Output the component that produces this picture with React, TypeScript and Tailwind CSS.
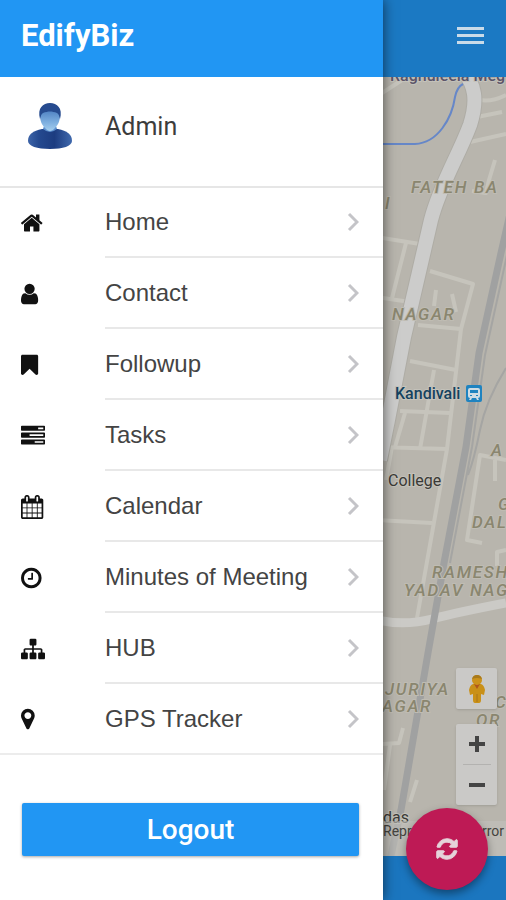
import React from "react";

const menu = [
  {
    label: "Home",
    box: "96 0 1792 1792",
    d: "M1472 992v480q0 26-19 45t-45 19h-384v-384h-256v384h-384q-26 0-45-19t-19-45v-480q0-1 .5-3t.5-3l575-474 575 474q1 2 1 6zm223-69l-62 74q-8 9-21 11h-3q-13 0-21-7l-692-577-692 577q-12 8-24 7-13-2-21-11l-62-74q-8-10-7-23.5t11-21.5l719-599q32-26 76-26t76 26l244 204v-195q0-14 9-23t23-9h192q14 0 23 9t9 23v408l219 182q10 8 11 21.5t-7 23.5z",
  },
  {
    label: "Contact",
    box: "256 0 1792 1792",
    d: "M1536 1399q0 109-62.5 187t-150.5 78h-854q-88 0-150.5-78t-62.5-187q0-85 8.5-160.5t31.5-152 58.5-131 94-89 134.5-34.5q131 128 313 128t313-128q76 0 134.5 34.5t94 89 58.5 131 31.5 152 8.5 160.5zm-256-887q0 159-112.5 271.5t-271.5 112.5-271.5-112.5-112.5-271.5 112.5-271.5 271.5-112.5 271.5 112.5 112.5 271.5z",
  },
  {
    label: "Followup",
    box: "256 0 1792 1792",
    d: "M1420 128q23 0 44 9 33 13 52.5 41t19.5 62v1289q0 34-19.5 62t-52.5 41q-19 8-44 8-48 0-83-32l-441-424-441 424q-36 33-83 33-23 0-44-9-33-13-52.5-41t-19.5-62v-1289q0-34 19.5-62t52.5-41q21-9 44-9h1048z",
  },
  {
    label: "Tasks",
    box: "0 0 1792 1792",
    d: "M1024 1408h640v-128h-640v128zm-384-512h1024v-128h-1024v128zm640-512h384v-128h-384v128zm512 832v256q0 26-19 45t-45 19h-1664q-26 0-45-19t-19-45v-256q0-26 19-45t45-19h1664q26 0 45 19t19 45zm0-512v256q0 26-19 45t-45 19h-1664q-26 0-45-19t-19-45v-256q0-26 19-45t45-19h1664q26 0 45 19t19 45zm0-512v256q0 26-19 45t-45 19h-1664q-26 0-45-19t-19-45v-256q0-26 19-45t45-19h1664q26 0 45 19t19 45z",
  },
  {
    label: "Calendar",
    box: "64 0 1792 1792",
    d: "M192 1664h288v-288h-288v288zm352 0h320v-288h-320v288zm-352-352h288v-320h-288v320zm352 0h320v-320h-320v320zm-352-384h288v-288h-288v288zm736 736h320v-288h-320v288zm-384-736h320v-288h-320v288zm768 736h288v-288h-288v288zm-384-352h320v-320h-320v320zm-352-864v-288q0-13-9.5-22.5t-22.5-9.5h-64q-13 0-22.5 9.5t-9.5 22.5v288q0 13 9.5 22.5t22.5 9.5h64q13 0 22.5-9.5t9.5-22.5zm736 864h288v-320h-288v320zm-384-384h320v-288h-320v288zm384 0h288v-288h-288v288zm32-480v-288q0-13-9.5-22.5t-22.5-9.5h-64q-13 0-22.5 9.5t-9.5 22.5v288q0 13 9.5 22.5t22.5 9.5h64q13 0 22.5-9.5t9.5-22.5zm384-64v1280q0 52-38 90t-90 38h-1408q-52 0-90-38t-38-90v-1280q0-52 38-90t90-38h128v-96q0-66 47-113t113-47h64q66 0 113 47t47 113v96h384v-96q0-66 47-113t113-47h64q66 0 113 47t47 113v96h128q52 0 90 38t38 90z",
  },
  {
    label: "Minutes of Meeting",
    box: "128 0 1792 1792",
    d: "M1024 544v448q0 14-9 23t-23 9h-320q-14 0-23-9t-9-23v-64q0-14 9-23t23-9h224v-352q0-14 9-23t23-9h64q14 0 23 9t9 23zm416 352q0-148-73-273t-198-198-273-73-273 73-198 198-73 273 73 273 198 198 273 73 273-73 198-198 73-273zm224 0q0 209-103 385.5t-279.5 279.5-385.5 103-385.5-103-279.5-279.5-103-385.5 103-385.5 279.5-279.5 385.5-103 385.5 103 279.5 279.5 103 385.5z",
  },
  {
    label: "HUB",
    box: "0 0 1792 1792",
    d: "M1792 1248v320q0 40-28 68t-68 28h-320q-40 0-68-28t-28-68v-320q0-40 28-68t68-28h96v-192h-512v192h96q40 0 68 28t28 68v320q0 40-28 68t-68 28h-320q-40 0-68-28t-28-68v-320q0-40 28-68t68-28h96v-192h-512v192h96q40 0 68 28t28 68v320q0 40-28 68t-68 28h-320q-40 0-68-28t-28-68v-320q0-40 28-68t68-28h96v-192q0-52 38-90t90-38h512v-192h-96q-40 0-68-28t-28-68v-320q0-40 28-68t68-28h320q40 0 68 28t28 68v320q0 40-28 68t-68 28h-96v192h512q52 0 90 38t38 90v192h96q40 0 68 28t28 68z",
  },
  {
    label: "GPS Tracker",
    box: "384 0 1792 1792",
    d: "M1152 640q0-106-75-181t-181-75-181 75-75 181 75 181 181 75 181-75 75-181zm256 0q0 109-33 179l-364 774q-16 33-47.5 52t-67.5 19-67.5-19-46.5-52l-365-774q-33-70-33-179 0-212 150-362t362-150 362 150 150 362z",
  },
];

function rowClass(i: number) {
  if (i === menu.length - 1) return "flex h-[69px] flex-1 items-center justify-between pr-6";
  if (i === 0) return "flex h-[70px] flex-1 items-center justify-between border-b-2 border-[#e8e8e8] pr-6";
  return "flex h-[71px] flex-1 items-center justify-between border-b-2 border-[#e8e8e8] pr-6";
}

function Avatar() {
  return (
    <svg viewBox="0 0 48 48" className="size-12 shrink-0" aria-hidden="true">
      <defs>
        <linearGradient id="body" x1="0" x2="1">
          <stop offset="0" stopColor="#3d64a8" />
          <stop offset="0.25" stopColor="#24498f" />
          <stop offset="0.6" stopColor="#1c3c80" />
          <stop offset="1" stopColor="#4069ad" />
        </linearGradient>
        <linearGradient id="face" x1="0" x2="0" y1="0" y2="1">
          <stop offset="0" stopColor="#4d80c2" />
          <stop offset="0.6" stopColor="#7fb0e0" />
          <stop offset="1" stopColor="#a4cdee" />
        </linearGradient>
      </defs>
      <path d="M0 38c0-7 5-10 14-12h16c9 2 14 5 14 12 0 5-9 8-22 8S0 43 0 38z" fill="url(#body)" />
      <path d="M15 26q7 6 14 0l-2-6H17z" fill="#5c90cf" />
      <path d="M12 12c0 6 2 10 5 13 3 4 7 4 10 0 3-3 5-7 5-13l-3-5H15z" fill="url(#face)" />
      <path d="M12 16C9 5 15 0 22 0s13 5 10 16c-1-3-1-5-3-6-5-2-9-2-14 0-2 1-2 3-3 6z" fill="#264b8f" />
    </svg>
  );
}

function MapCanvas() {
  return (
    <svg
      viewBox="376 77 130 779"
      preserveAspectRatio="xMaxYMin slice"
      className="absolute inset-y-0 right-0 h-full w-[130px]"
      aria-label="Map of Kandivali"
    >
      <g fill="none" stroke="#c6c4bc" strokeWidth="4" strokeLinejoin="round">
        <path d="M376 97L402 80M480 100Q492 102 506 95M477 117L502 112M470 142L506 134M495 160L489 180L486 193L472 191" />
        <path d="M376 237L420 244M406 243L392 298M376 297L410 302M430 271L473 284L461 329L447 449L417 618" />
        <path d="M436 290L434 306M452 294L456 312M418 325L461 329M410 361L456 370M434 370L420 449M400 411L450 413M405 413L395 447M376 447L448 449M392 447L386 480" />
        <path d="M376 520L432 523M506 460L480 455L467 540L482 543M495 460V481M506 550L497 552V566" />
        <path d="M403 728L399 743L383 744M390 745L384 790M417 780L410 802" />
      </g>
      <path d="M376 620Q405 626 432 619T506 603" fill="none" stroke="#cbcac6" strokeWidth="9" />
      <path d="M463 70C475 85 478 100 470 125C458 157 440 185 431 220L404 337L388 420L380 460" fill="none" stroke="#aeaca5" strokeWidth="16" />
      <path d="M463 70C475 85 478 100 470 125C458 157 440 185 431 220L404 337L388 420L380 460" fill="none" stroke="#cccccb" strokeWidth="14" />
      <path d="M376 144H415C438 143 452 118 455 97Q457 87 463 84" fill="none" stroke="#6687c8" strokeWidth="2" />
      <path d="M512 205L501 253L479 353L466 447L444 563L428 653L401 810L390 860" fill="none" stroke="#a0a1a1" strokeWidth="7" />
      <path d="M507 255L485 355L472 447L450 563M506 368Q486 400 480 430T468 475" fill="none" stroke="#a5a5a3" strokeWidth="2" />

      <g className="font-['Roboto',sans-serif] italic tracking-widest" fontSize="17" fontWeight="500" fill="#8a866f" stroke="#bfbcb3" strokeWidth="2" paintOrder="stroke">
        <text x="411" y="193">FATEH BA</text>
        <text x="385" y="209">I</text>
        <text x="392" y="320">NAGAR</text>
        <text x="491" y="456">A</text>
        <text x="498" y="510">G</text>
        <text x="472" y="528">DAL</text>
        <text x="432" y="578">RAMESH</text>
        <text x="404" y="596">YADAV NAG</text>
        <text x="385" y="695">JURIYA</text>
        <text x="382" y="712">AGAR</text>
        <text x="495" y="708">C</text>
        <text x="476" y="726">OR</text>
      </g>
      <g className="font-['Roboto',sans-serif]" fontSize="16" stroke="#c4c2ba" strokeWidth="2" paintOrder="stroke">
        <text x="390" y="81" fontWeight="500" fill="#5b5468">Raghuleela Meg</text>
        <text x="395" y="399" fontWeight="500" fill="#15425f">Kandivali</text>
        <text x="388" y="486" fill="#3a3936">College</text>
        <text x="383" y="823" fill="#3a3936">das</text>
      </g>

      <rect x="466" y="385" width="16" height="17" rx="2" fill="#1f83c0" />
      <path d="M470 388h8q2 0 2 2v6q0 2-2 2l1 2h-2l-1-2h-4l-1 2h-2l1-2q-2 0-2-2v-6q0-2 2-2z" fill="#cfdce4" />
      <path d="M470 390h8v3h-8zM470 395h2v1h-2zM476 395h2v1h-2z" fill="#1f83c0" />
    </svg>
  );
}

export default function App() {
  return (
    <div className="relative flex min-h-screen flex-col overflow-hidden font-['Roboto',sans-serif]">
      <header className="flex h-[77px] shrink-0 items-center justify-end bg-[#1b79c3] px-[22px] pb-1.5">
        <button aria-label="Open menu" className="flex w-[27px] flex-col gap-1">
          <span className="h-[3px] bg-[#c9dbe9]" />
          <span className="h-[3px] bg-[#c9dbe9]" />
          <span className="h-[3px] bg-[#c9dbe9]" />
        </button>
      </header>

      <main className="relative flex flex-1 flex-col items-end justify-end bg-[#b8b5ad]">
        <MapCanvas />
        <div className="relative mr-[9px] mb-[51px] flex flex-col gap-[15px]">
          <button aria-label="Street view" className="flex size-[41px] items-center justify-center rounded-xs bg-[#cac9c7] shadow-sm">
            <svg viewBox="0 0 18 30" className="h-[30px] w-[18px]" aria-hidden="true">
              <path d="M5 10h8q3 1 4 6l-1 5-3-1v6q0 3-2 3H7q-2 0-2-3v-6l-3 1-1-5q1-5 4-6z" fill="#c99018" />
              <path d="M6 10h6l-3 5z" fill="#b0561c" />
              <path d="M9 20v8" stroke="#a8741a" />
              <circle cx="9" cy="6" r="5" fill="#cc921a" />
              <path d="M4 5q1-4 5-4t5 4q-5-2-10 0z" fill="#a8791b" />
            </svg>
          </button>
          <div className="flex w-[41px] flex-col items-center rounded-xs bg-[#cac9c7] shadow-sm">
            <button aria-label="Zoom in" className="flex h-10 w-full items-center justify-center">
              <svg viewBox="0 0 16 16" className="size-4" aria-hidden="true">
                <path d="M8 0v16M0 8h16" stroke="#444" strokeWidth="4" />
              </svg>
            </button>
            <span className="h-px w-7 bg-[#b3b2b0]" />
            <button aria-label="Zoom out" className="flex h-10 w-full items-center justify-center">
              <svg viewBox="0 0 16 16" className="size-4" aria-hidden="true">
                <path d="M0 8h16" stroke="#444" strokeWidth="4" />
              </svg>
            </button>
          </div>
        </div>
        <p className="absolute right-0 bottom-0 flex h-[35px] w-[123px] justify-between bg-[#c2c1bd]/60 text-sm leading-5 text-[#45443f]">
          <span>Repr</span>
          <span className="pr-0.5">rror</span>
        </p>
        <button
          aria-label="Refresh"
          className="absolute right-[18px] -bottom-[34px] z-10 flex size-[82px] items-center justify-center rounded-full bg-[#be1a55] shadow-[0_4px_8px_rgba(0,0,0,0.4)]"
        >
          <svg viewBox="0 0 1792 1792" className="size-6 fill-[#e5d3da] stroke-[#e5d3da]" strokeWidth="70" aria-hidden="true">
            <path d="M1639 1056q0 5-1 7-64 268-268 434.5t-478 166.5q-146 0-282.5-55t-243.5-157l-129 129q-19 19-45 19t-45-19-19-45v-448q0-26 19-45t45-19h448q26 0 45 19t19 45-19 45l-137 137q71 66 161 102t187 36q134 0 250-65t186-179q11-17 53-117 8-23 30-23h192q13 0 22.5 9.5t9.5 22.5zm25-800v448q0 26-19 45t-45 19h-448q-26 0-45-19t-19-45 19-45l138-138q-148-137-349-137-134 0-250 65t-186 179q-11 17-53 117-8 23-30 23h-199q-13 0-22.5-9.5t-9.5-22.5v-7q65-268 270-434.5t480-166.5q146 0 284 55.5t245 156.5l130-129q19-19 45-19t45 19 19 45z" />
          </svg>
        </button>
      </main>

      <footer className="h-11 shrink-0 bg-[#1b76bf]" />

      <aside className="absolute inset-y-0 left-0 z-20 flex w-[383px] flex-col bg-white shadow-[0_0_12px_rgba(0,0,0,0.6)]">
        <div className="flex h-[77px] shrink-0 items-center bg-[#2196f3] px-[21px] pb-1">
          <h1 className="text-[31px] font-bold text-white">EdifyBiz</h1>
        </div>
        <div className="flex items-center gap-[29px] border-b-2 border-[#e6e6e6] pt-[26px] pb-[35px] pl-7">
          <Avatar />
          <span className="text-[25px] text-[#3c3c3c]">Admin</span>
        </div>
        <nav>
          <ul className="border-b-2 border-[#ececec]">
            {menu.map((item, i) => (
              <li key={item.label}>
                <a href="#" className="flex items-center pl-[21px]">
                  <svg viewBox={item.box} className="mr-[60px] size-6 shrink-0 fill-[#111]" aria-hidden="true">
                    <path d={item.d} />
                  </svg>
                  <span className={rowClass(i)}>
                    <span className="font-['Liberation_Sans',Arial,sans-serif] text-2xl text-[#444]">{item.label}</span>
                    <svg viewBox="0 0 12 20" className="h-5 w-3" aria-hidden="true">
                      <path d="M2 2l8 8-8 8" fill="none" stroke="#c4c4c8" strokeWidth="3" />
                    </svg>
                  </span>
                </a>
              </li>
            ))}
          </ul>
        </nav>
        <button className="mx-[22px] mt-12 mr-6 h-[53px] rounded-xs bg-[#2196f3] text-[28px] font-medium text-white shadow-[0_1px_3px_rgba(0,0,0,0.35)]">
          Logout
        </button>
      </aside>
    </div>
  );
}
